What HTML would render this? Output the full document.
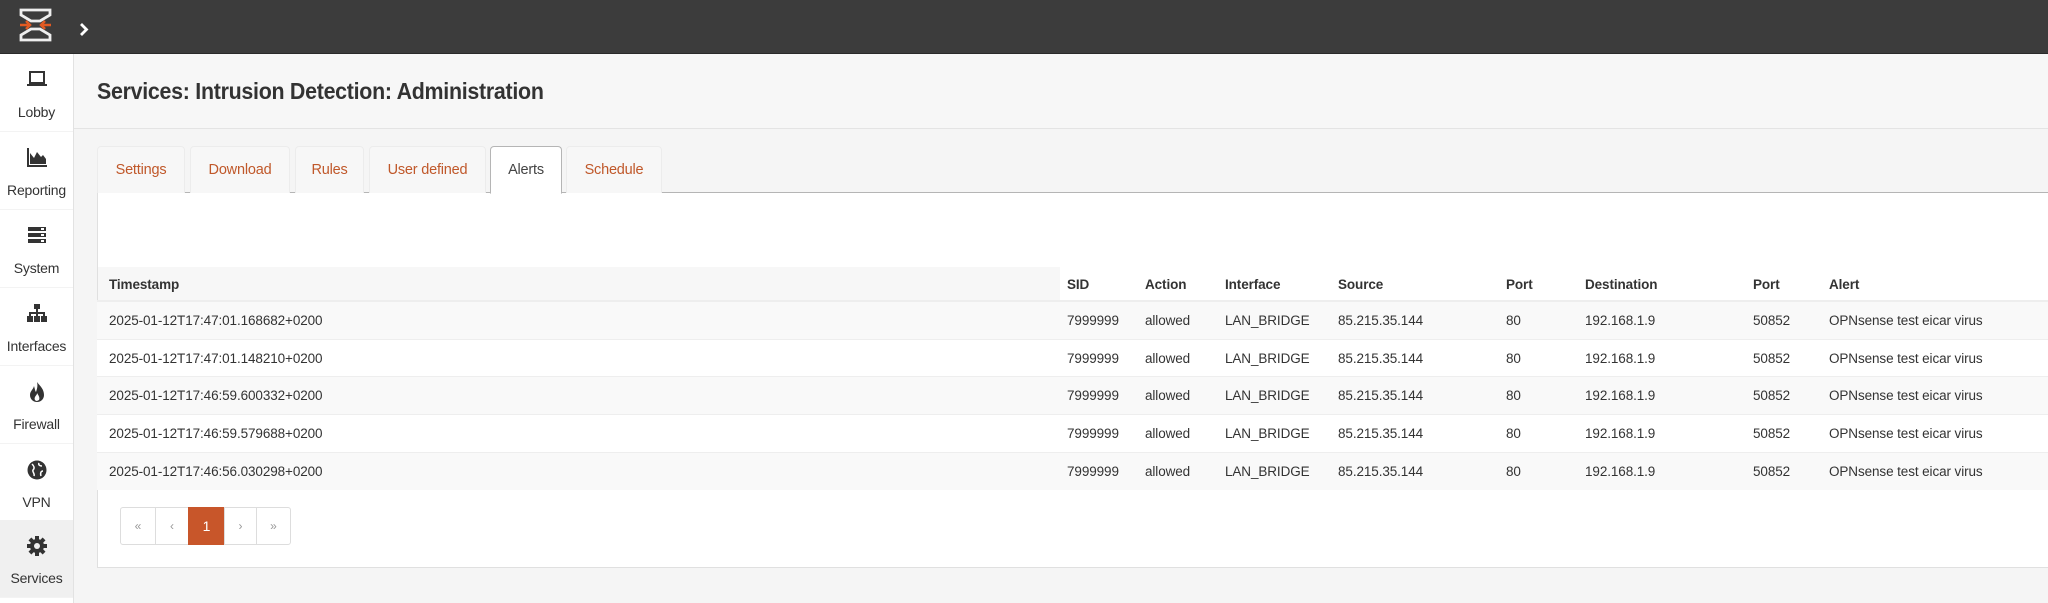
<!DOCTYPE html>
<html><head><meta charset="utf-8"><style>
*{box-sizing:border-box;margin:0;padding:0}
body{width:2048px;height:603px;overflow:hidden;background:#f5f5f5;font-family:"Liberation Sans",sans-serif;color:#333;position:relative}
.top{position:absolute;left:0;top:0;width:2048px;height:54px;background:#3c3c3c;border-bottom:1px solid #2a2a2a}
.side{position:absolute;left:0;top:54px;width:74px;height:549px;background:#fff;border-right:1px solid #e2e2e2}
.item{position:absolute;left:0;width:73px;height:78px;border-bottom:1px solid #f3f3f3;text-align:center}
.item svg{position:absolute;left:26px;top:15px}
.item span{position:absolute;left:0;width:73px;top:50px;font-size:14px;color:#333;letter-spacing:-0.2px}
.item.act{background:#f0f0f0}
.hdr{position:absolute;left:74px;top:54px;right:0;height:75px;background:#f7f7f7;border-bottom:1px solid #e4e4e4}
.hdr h1{position:absolute;left:23px;top:24px;font-size:23px;font-weight:bold;color:#333;letter-spacing:-0.3px;transform:scaleX(0.93);transform-origin:left}
.tab{position:absolute;top:146px;height:47px;background:#f7f7f7;border:1px solid #ececec;border-bottom:none;border-radius:4px 4px 0 0;font-size:14.5px;color:#c0582a;text-align:center;line-height:46px;letter-spacing:-0.2px}
.tab.act{background:#fff;border:1px solid #b5b5b5;border-bottom:1px solid #fff;color:#444;z-index:2;height:48px}
.panel{position:absolute;left:97px;top:192px;width:1960px;height:376px;background:#fff;border:1px solid #e0e0e0;border-top:1px solid #b5b5b5;border-right:none}
.row{position:absolute;left:97px;width:1951px;font-size:13.5px;color:#333;letter-spacing:-0.1px}
.row div{position:absolute;top:0}
.pg{position:absolute;top:507px;height:38px;border:1px solid #ddd;background:#fff;color:#999;font-size:12px;text-align:center;line-height:36px}
</style></head><body>
<div class="top">
<svg style="position:absolute;left:18px;top:8px" width="35" height="34" viewBox="0 0 35 34">
<path d="M3 2H32V7L22 13H13L3 7Z" fill="none" stroke="#eee" stroke-width="2.8"/>
<path d="M3 32H32V27L22 21H13L3 27Z" fill="none" stroke="#eee" stroke-width="2.8"/>
<path d="M2 17H11M8 13L12 17L8 21M33 17H24M27 13L23 17L27 21" fill="none" stroke="#e25a22" stroke-width="2.5"/>
</svg>
<svg style="position:absolute;left:79px;top:22px" width="10" height="15" viewBox="0 0 10 15"><path d="M2 2L7.5 7.5L2 13" fill="none" stroke="#fff" stroke-width="2.8"/></svg>
</div>
<div class="side">
<div class="item" style="top:0"><svg width="22" height="20" viewBox="0 0 22 20"><rect x="4" y="3" width="14" height="11" fill="none" stroke="#333" stroke-width="2"/><rect x="1" y="15" width="20" height="2" fill="#333"/></svg><span>Lobby</span></div>
<div class="item" style="top:78px"><svg width="22" height="20" viewBox="0 0 22 20"><path d="M2 1V19H21" fill="none" stroke="#333" stroke-width="2"/><path d="M4 17V6L8 11L11 5L15 10L17 8L20 12V17Z" fill="#333"/></svg><span>Reporting</span></div>
<div class="item" style="top:156px"><svg width="22" height="20" viewBox="0 0 22 20"><rect x="2" y="2" width="18" height="4" fill="#333"/><rect x="2" y="8" width="18" height="4" fill="#333"/><rect x="2" y="14" width="18" height="4" fill="#333"/><rect x="15" y="3" width="3" height="2" fill="#fff"/><rect x="15" y="9" width="3" height="2" fill="#fff"/><rect x="15" y="15" width="3" height="2" fill="#fff"/></svg><span>System</span></div>
<div class="item" style="top:234px"><svg width="22" height="20" viewBox="0 0 22 20"><rect x="8" y="1" width="6" height="5" fill="#333"/><path d="M11 6V10M4 13V10H18V13M11 10V13" fill="none" stroke="#333" stroke-width="2"/><rect x="1" y="13" width="6" height="6" fill="#333"/><rect x="8" y="13" width="6" height="6" fill="#333"/><rect x="15" y="13" width="6" height="6" fill="#333"/></svg><span>Interfaces</span></div>
<div class="item" style="top:312px"><svg width="22" height="22" viewBox="0 0 22 22"><path d="M11 1C14 5 18 8 18 14C18 18 15 21 11 21C7 21 4 18 4 14C4 10 7 9 8 5C9 8 9 10 10 11C11 8 12 5 11 1Z" fill="#333"/><path d="M11 20C9 20 8 18 9 16C10 14 11 14 11 12C13 15 14 17 13 19Z" fill="#fff"/></svg><span>Firewall</span></div>
<div class="item" style="top:390px"><svg width="22" height="22" viewBox="0 0 22 22"><circle cx="11" cy="11" r="9.5" fill="#333"/><path d="M6 5C8 7 9 9 7 11C6 13 9 14 8 17M13 4C12 6 14 7 16 7M17 12C15 12 14 14 15 17" fill="none" stroke="#fff" stroke-width="1.5"/></svg><span>VPN</span></div>
<div class="item act" style="top:466px;height:78px"><svg width="22" height="22" viewBox="0 0 22 22"><g fill="#333"><circle cx="11" cy="11" r="7"/><rect x="9" y="1" width="4" height="20"/><rect x="1" y="9" width="20" height="4"/><rect x="9" y="1" width="4" height="20" transform="rotate(45 11 11)"/><rect x="9" y="1" width="4" height="20" transform="rotate(-45 11 11)"/></g><circle cx="11" cy="11" r="3" fill="#f0f0f0"/></svg><span>Services</span></div>
</div>
<div class="hdr"><h1>Services: Intrusion Detection: Administration</h1></div>
<div class="panel"></div>
<div class="tab" style="left:97px;width:88px">Settings</div>
<div class="tab" style="left:190px;width:100px">Download</div>
<div class="tab" style="left:295px;width:69px">Rules</div>
<div class="tab" style="left:369px;width:117px">User defined</div>
<div class="tab act" style="left:490px;width:72px">Alerts</div>
<div class="tab" style="left:566px;width:96px">Schedule</div>
<div style="position:absolute;left:98px;top:267px;width:962px;height:35px;background:#f7f7f7"></div>
<div class="row" style="top:267px;height:35px;line-height:35px;font-weight:bold;border-bottom:2px solid #eee;font-size:13.5px">
<div style="left:12px">Timestamp</div><div style="left:970px">SID</div><div style="left:1048px">Action</div><div style="left:1128px">Interface</div><div style="left:1241px">Source</div><div style="left:1409px">Port</div><div style="left:1488px">Destination</div><div style="left:1656px">Port</div><div style="left:1732px">Alert</div></div>
<div class="row" style="top:302px;height:38px;line-height:38px;background:#f9f9f9;border-bottom:1px solid #eee"><div style="left:12px">2025-01-12T17:47:01.168682+0200</div><div style="left:970px">7999999</div><div style="left:1048px">allowed</div><div style="left:1128px">LAN_BRIDGE</div><div style="left:1241px">85.215.35.144</div><div style="left:1409px">80</div><div style="left:1488px">192.168.1.9</div><div style="left:1656px">50852</div><div style="left:1732px">OPNsense test eicar virus</div></div>
<div class="row" style="top:340px;height:37px;line-height:37px;background:#fff;border-bottom:1px solid #eee"><div style="left:12px">2025-01-12T17:47:01.148210+0200</div><div style="left:970px">7999999</div><div style="left:1048px">allowed</div><div style="left:1128px">LAN_BRIDGE</div><div style="left:1241px">85.215.35.144</div><div style="left:1409px">80</div><div style="left:1488px">192.168.1.9</div><div style="left:1656px">50852</div><div style="left:1732px">OPNsense test eicar virus</div></div>
<div class="row" style="top:377px;height:38px;line-height:38px;background:#f9f9f9;border-bottom:1px solid #eee"><div style="left:12px">2025-01-12T17:46:59.600332+0200</div><div style="left:970px">7999999</div><div style="left:1048px">allowed</div><div style="left:1128px">LAN_BRIDGE</div><div style="left:1241px">85.215.35.144</div><div style="left:1409px">80</div><div style="left:1488px">192.168.1.9</div><div style="left:1656px">50852</div><div style="left:1732px">OPNsense test eicar virus</div></div>
<div class="row" style="top:415px;height:38px;line-height:38px;background:#fff;border-bottom:1px solid #eee"><div style="left:12px">2025-01-12T17:46:59.579688+0200</div><div style="left:970px">7999999</div><div style="left:1048px">allowed</div><div style="left:1128px">LAN_BRIDGE</div><div style="left:1241px">85.215.35.144</div><div style="left:1409px">80</div><div style="left:1488px">192.168.1.9</div><div style="left:1656px">50852</div><div style="left:1732px">OPNsense test eicar virus</div></div>
<div class="row" style="top:453px;height:37px;line-height:37px;background:#f9f9f9"><div style="left:12px">2025-01-12T17:46:56.030298+0200</div><div style="left:970px">7999999</div><div style="left:1048px">allowed</div><div style="left:1128px">LAN_BRIDGE</div><div style="left:1241px">85.215.35.144</div><div style="left:1409px">80</div><div style="left:1488px">192.168.1.9</div><div style="left:1656px">50852</div><div style="left:1732px">OPNsense test eicar virus</div></div>
<div class="pg" style="left:120px;width:36px;border-radius:3px 0 0 3px">«</div>
<div class="pg" style="left:155px;width:34px">‹</div>
<div class="pg" style="left:188px;width:37px;background:#c8562a;border-color:#c8562a;color:#fff;font-size:14px">1</div>
<div class="pg" style="left:224px;width:33px">›</div>
<div class="pg" style="left:256px;width:35px;border-radius:0 3px 3px 0">»</div>
</body></html>
